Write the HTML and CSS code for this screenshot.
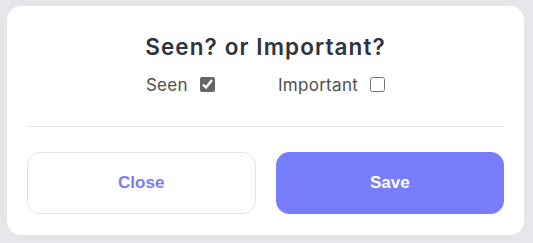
FILE: index.html
```html
<!DOCTYPE html>
<html>
<head>
<meta charset="utf-8">
<link rel="stylesheet" href="styles.css">
</head>
<body>
<div class="card">
  <h2 class="title">Seen? or Important?</h2>
  <div class="options">
    <label class="opt">Seen <input type="checkbox" checked></label>
    <label class="opt">Important <input type="checkbox"></label>
  </div>
  <hr class="divider">
  <div class="actions">
    <button class="btn btn-close">Close</button>
    <button class="btn btn-save">Save</button>
  </div>
</div>
</body>
</html>
```
FILE: styles.css
```css
html, body {
  margin: 0;
  background: #e4e6ea;
}
body {
  padding: 6px 9px 0 7px;
  font-family: Inter, "Noto Sans", sans-serif;
}
.card {
  background: #ffffff;
  border-radius: 14px;
  padding: 20px 20px 21px;
  height: 229px;
  box-sizing: border-box;
}
.title {
  margin: 6px 0 0;
  font-size: 22.5px;
  line-height: 29px;
  font-weight: 600;
  letter-spacing: 1.1px;
  color: #2d3340;
  text-align: center;
}
.options {
  margin-top: 12px;
  display: flex;
  justify-content: center;
  gap: 63px;
  font-size: 17px;
  line-height: 24px;
  letter-spacing: 0.3px;
  color: #4f4f4f;
}
.opt {
  display: flex;
  align-items: center;
  gap: 12px;
}
.opt input {
  margin: 0;
  width: 15px;
  height: 15px;
  accent-color: #666666;
  position: relative;
  top: -1px;
}
.divider {
  margin: 29px 0 0;
  border: 0;
  border-top: 1px solid #e5e7eb;
  height: 0;
}
.actions {
  margin-top: 25px;
  display: grid;
  grid-template-columns: 1fr 1fr;
  gap: 20px;
}
.btn {
  height: 62px;
  border-radius: 13px;
  font-family: "Liberation Sans", Arial, sans-serif;
  font-weight: 700;
  font-size: 17px;
  cursor: pointer;
}
.btn-close {
  background: #ffffff;
  border: 1px solid #e4e4e7;
  color: #7a7ef3;
}
.btn-save {
  background: #787dfc;
  border: 1px solid #787dfc;
  color: #ffffff;
}
```
